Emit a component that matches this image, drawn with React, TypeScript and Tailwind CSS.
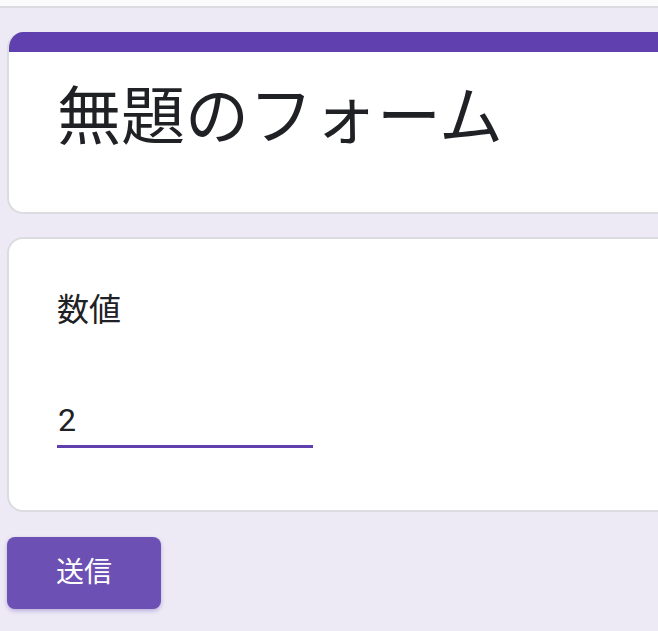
import React from "react";

export default function App() {
  return (
    <div
      className="w-[658px] h-[631px] overflow-hidden bg-[#fbfbfb]"
      style={{ fontFamily: 'Roboto, "Noto Sans CJK JP", sans-serif' }}
    >
      <div className="mt-[6px] h-[625px] border-t-2 border-[#dadce0] bg-[#edeaf5]">
        <div className="pl-[7px] pt-[24px] flex flex-col w-[760px]">
          {/* title card */}
          <div className="rounded-[16px] overflow-hidden border-2 border-t-0 border-[#dadce0] bg-white">
            <div className="h-[20px] bg-[#5f40ae]" />
            <div className="pl-[48px] pt-[34px] pb-[62px]">
              <div className="text-[64px] leading-[64px] text-[#202124] font-normal">
                無題のフォーム
              </div>
            </div>
          </div>

          {/* question card */}
          <div className="mt-[23px] rounded-[16px] border-2 border-[#dadce0] bg-white pl-[48px] pt-[55px] h-[275px]">
            <div className="text-[32px] leading-[32px] text-[#202124]">数値</div>
            <div className="mt-[74px] w-[256px]">
              <div className="text-[32px] leading-[40px] text-[#202124] pl-px">2</div>
              <div className="mt-[5px] h-[3px] bg-[#5f40ae]" />
            </div>
          </div>

          {/* submit */}
          <div className="mt-[25px]">
            <button className="w-[154px] h-[72px] rounded-[8px] bg-[#6c50b4] text-white text-[28px] leading-[28px] shadow-[0_2px_4px_rgba(95,64,174,0.35)]">
              送信
            </button>
          </div>
        </div>
      </div>
    </div>
  );
}
